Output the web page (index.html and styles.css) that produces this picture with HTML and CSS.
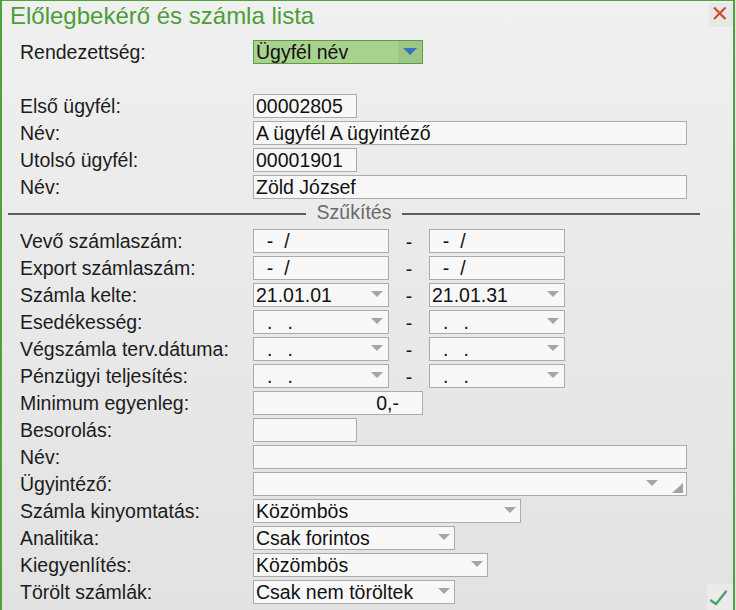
FILE: index.html
```html
<!DOCTYPE html>
<html lang="hu">
<head>
<meta charset="utf-8">
<title>Előlegbekérő és számla lista</title>
<link rel="stylesheet" href="styles.css">
</head>
<body>
<div class="window">
  <div class="titlebar">
    <div class="title">Előlegbekérő és számla lista</div>
    <button class="close" type="button" aria-label="Bezárás">
      <svg width="24" height="24" viewBox="0 0 24 24"><path d="M5 4.5 L16.5 16 M16.5 4.5 L5 16" stroke="#d5492e" stroke-width="2.2" fill="none"/></svg>
    </button>
  </div>
  <div class="form">
    <div class="row sort-row">
      <span class="lbl">Rendezettség:</span>
      <div class="f green w170"><span class="val">Ügyfél név</span><span class="arrowbox"><i class="tri blue"></i></span></div>
    </div>

    <div class="block">
      <div class="row"><span class="lbl">Első ügyfél:</span><div class="f w104">00002805</div></div>
      <div class="row"><span class="lbl">Név:</span><div class="f w434">A ügyfél A ügyintéző</div></div>
      <div class="row"><span class="lbl">Utolsó ügyfél:</span><div class="f w104">00001901</div></div>
      <div class="row"><span class="lbl">Név:</span><div class="f w434">Zöld József</div></div>
    </div>

    <div class="sep"><span class="line"></span><span class="sep-text">Szűkítés</span><span class="line"></span></div>

    <div class="row"><span class="lbl">Vevő számlaszám:</span><div class="f w136 mask">  -  /</div><span class="to">-</span><div class="f w136 mask">  -  /</div></div>
    <div class="row"><span class="lbl">Export számlaszám:</span><div class="f w136 mask">  -  /</div><span class="to">-</span><div class="f w136 mask">  -  /</div></div>
    <div class="row"><span class="lbl">Számla kelte:</span><div class="f w136"><span class="val">21.01.01</span><i class="tri date"></i></div><span class="to">-</span><div class="f w136"><span class="val">21.01.31</span><i class="tri date"></i></div></div>
    <div class="row"><span class="lbl">Esedékesség:</span><div class="f w136"><span class="dots"><b>.</b><b>.</b></span><i class="tri date"></i></div><span class="to">-</span><div class="f w136"><span class="dots"><b>.</b><b>.</b></span><i class="tri date"></i></div></div>
    <div class="row"><span class="lbl">Végszámla terv.dátuma:</span><div class="f w136"><span class="dots"><b>.</b><b>.</b></span><i class="tri date"></i></div><span class="to">-</span><div class="f w136"><span class="dots"><b>.</b><b>.</b></span><i class="tri date"></i></div></div>
    <div class="row"><span class="lbl">Pénzügyi teljesítés:</span><div class="f w136"><span class="dots"><b>.</b><b>.</b></span><i class="tri date"></i></div><span class="to">-</span><div class="f w136"><span class="dots"><b>.</b><b>.</b></span><i class="tri date"></i></div></div>
    <div class="row"><span class="lbl">Minimum egyenleg:</span><div class="f w170 num">0,-</div></div>
    <div class="row"><span class="lbl">Besorolás:</span><div class="f w104"></div></div>
    <div class="row"><span class="lbl">Név:</span><div class="f w434"></div></div>
    <div class="row"><span class="lbl">Ügyintéző:</span><div class="f w434"><i class="tri combo"></i><svg class="grip" width="11" height="10" viewBox="0 0 11 10"><polygon points="0,10 11,10 11,0" fill="#a3a3a3"/></svg></div></div>
    <div class="row"><span class="lbl">Számla kinyomtatás:</span><div class="f w268"><span class="val">Közömbös</span><i class="tri sel"></i></div></div>
    <div class="row"><span class="lbl">Analitika:</span><div class="f w202"><span class="val">Csak forintos</span><i class="tri sel"></i></div></div>
    <div class="row"><span class="lbl">Kiegyenlítés:</span><div class="f w235"><span class="val">Közömbös</span><i class="tri sel"></i></div></div>
    <div class="row last"><span class="lbl">Törölt számlák:</span><div class="f w202"><span class="val">Csak nem töröltek</span><i class="tri sel"></i></div>
      <button class="ok" type="button" aria-label="OK">
        <svg width="26" height="26" viewBox="0 0 26 26"><path d="M4 16.5 L9 20 L19 7.5" stroke="#46a46c" stroke-width="2.4" fill="none" stroke-linecap="round" stroke-linejoin="round"/></svg>
      </button>
    </div>
  </div>
</div>
</body>
</html>
```

FILE: styles.css
```css
html, body {
  margin: 0;
  padding: 0;
  background: #e4e4e4;
}

.window {
  width: 735px;
  height: 610px;
  box-sizing: border-box;
  border-left: 2px solid #4fa23a;
  border-top: 1px solid #4fa23a;
  border-right: 2px solid #4fa23a;
  background: linear-gradient(to bottom, #f0f0f0 0%, #e2e2e2 100%);
  font-family: "Liberation Sans", Arial, sans-serif;
  font-size: 19.5px;
  color: #1c1c1c;
  overflow: hidden;
}

.titlebar {
  height: 30px;
  display: flex;
  align-items: flex-start;
  padding-left: 8px;
}

.title {
  font-size: 24px;
  line-height: 30px;
  color: #4b9e37;
  flex: 1;
}

.close {
  width: 24px;
  height: 24px;
  margin: 2px 0 0 0;
  padding: 0;
  border: none;
  background: #e7e7e7;
  display: flex;
  align-items: center;
  justify-content: center;
}

.form {
  padding-left: 18px;
}

.row {
  display: flex;
  align-items: center;
  height: 24px;
  margin-bottom: 3px;
  line-height: 22px;
}

.sort-row {
  margin-top: 9px;
}

.block {
  margin-top: 30px;
}

.lbl {
  width: 233px;
  flex: none;
  white-space: nowrap;
}

.f {
  box-sizing: border-box;
  height: 24px;
  border: 1px solid #ababab;
  background: #f8f8f8;
  display: flex;
  align-items: center;
  padding-left: 2px;
  flex: none;
  white-space: pre;
  color: #111;
}

.w104 { width: 104px; }
.w136 { width: 136px; }
.w170 { width: 170px; }
.w202 { width: 202px; }
.w235 { width: 235px; }
.w268 { width: 268px; }
.w434 { width: 434px; }

.num {
  justify-content: flex-end;
  padding-right: 23px;
}

.val {
  flex: 1;
  white-space: nowrap;
}

.to {
  width: 40px;
  text-align: center;
  flex: none;
  padding-top: 2px;
}

.dots {
  flex: 1;
  display: flex;
  padding-left: 11px;
  line-height: 22px;
}

.dots b {
  font-weight: normal;
  margin-right: 15px;
}

.tri {
  display: block;
  width: 0;
  height: 0;
  border-left: 6px solid transparent;
  border-right: 6px solid transparent;
  border-top: 6px solid #a5a5a5;
  flex: none;
}

.tri.date { margin-right: 5px; margin-top: -3px; }
.tri.sel { margin-right: 4px; margin-top: -2px; }
.tri.combo { margin-left: auto; margin-right: 14px; margin-top: -2px; }

.grip {
  align-self: flex-end;
  margin-right: 3px;
  margin-bottom: 2px;
}

.green {
  border-color: #5a9c3f;
  background: #a9d18f;
  padding-right: 0;
}

.arrowbox {
  width: 24px;
  height: 22px;
  background: #9cc586;
  display: flex;
  align-items: center;
  justify-content: center;
}

.tri.blue {
  border-top-color: #3a72bd;
  border-left-width: 7px;
  border-right-width: 7px;
  border-top-width: 7px;
  margin-top: -1px;
}

.sep {
  display: flex;
  align-items: center;
  height: 24px;
  margin: 0 0 3px -12px;
  width: 692px;
}

.sep .line {
  flex: 1;
  height: 2px;
  background: #5c5c5c;
}

.sep-text {
  color: #6a6a6a;
  margin: 0 11px;
  line-height: 22px;
  position: relative;
  top: -2px;
}

.ok {
  margin-left: auto;
  align-self: flex-end;
  margin-bottom: -6px;
  width: 26px;
  height: 26px;
  padding: 0;
  border: none;
  background: #ebebeb;
  display: flex;
  align-items: center;
  justify-content: center;
}
```
